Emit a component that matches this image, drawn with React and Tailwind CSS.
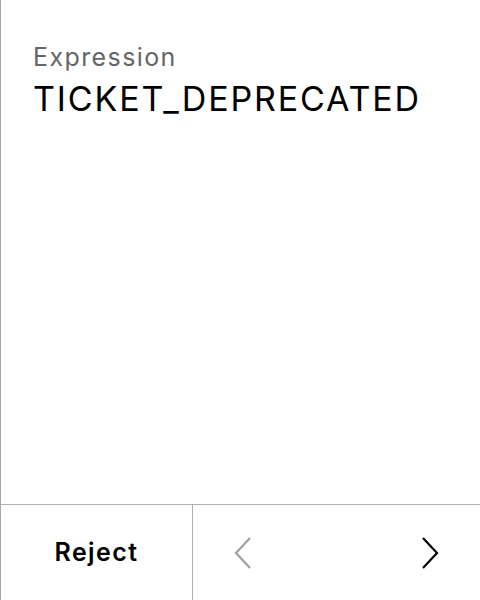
export default function App() {
  return (
    <div
      className="w-[480px] h-[600px] flex flex-col bg-white border-l border-[#a8a8a8] text-black"
      style={{ fontFamily: "Inter, 'Liberation Sans', sans-serif" }}
    >
      <div className="flex-1 pl-8 pt-[40px]">
        <p className="text-[25px] leading-[34px] tracking-[1.4px] text-[#666666]">Expression</p>
        <p className="mt-[3px] text-[34px] leading-[44px] tracking-[1.85px]">TICKET_DEPRECATED</p>
      </div>
      <div className="h-[96px] flex border-t border-[#b0b0b0]">
        <button className="w-[191px] flex items-center justify-center text-[25px] tracking-[1.4px] font-semibold">
          Reject
        </button>
        <div className="flex-1 flex justify-between border-l border-[#b0b0b0]">
          <button className="w-[100px] flex items-center justify-center text-[#a0a0a0]">
            <svg width="20" height="34" viewBox="0 0 20 34" fill="none" stroke="currentColor" strokeWidth="2.2">
              <path d="M17 2 L3 17 L17 32" />
            </svg>
          </button>
          <button className="w-[100px] flex items-center justify-center text-black">
            <svg width="20" height="34" viewBox="0 0 20 34" fill="none" stroke="currentColor" strokeWidth="2.2">
              <path d="M3 2 L17 17 L3 32" />
            </svg>
          </button>
        </div>
      </div>
    </div>
  );
}
